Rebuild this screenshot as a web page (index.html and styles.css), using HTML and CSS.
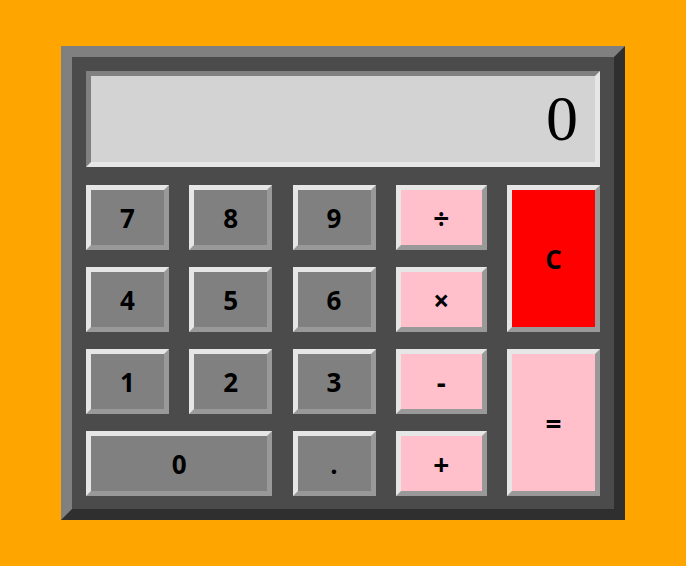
FILE: index.html
```html
<!DOCTYPE html>
<html>
<head>
<meta charset="utf-8">
<link rel="stylesheet" href="styles.css">
</head>
<body>
<div class="calc">
  <div class="display">0</div>
  <div class="keys">
    <button class="key num">7</button>
    <button class="key num">8</button>
    <button class="key num">9</button>
    <button class="key op">÷</button>
    <button class="key clear">C</button>
    <button class="key num">4</button>
    <button class="key num">5</button>
    <button class="key num">6</button>
    <button class="key op">×</button>
    <button class="key num">1</button>
    <button class="key num">2</button>
    <button class="key num">3</button>
    <button class="key op">-</button>
    <button class="key op equals">=</button>
    <button class="key num zero">0</button>
    <button class="key num">.</button>
    <button class="key op">+</button>
  </div>
</div>
</body>
</html>
```
FILE: styles.css
```css
html, body {
  margin: 0;
  padding: 0;
}
body {
  background: #ffa500;
  width: 686px;
  height: 566px;
  padding-top: 46px;
  padding-left: 61px;
  box-sizing: border-box;
  font-family: "Open Sans", "Noto Sans", sans-serif;
}
.calc {
  width: 564px;
  height: 474px;
  box-sizing: border-box;
  background: #4b4b4b;
  border-style: solid;
  border-width: 11px;
  border-color: #808080 #2f2f2f #2f2f2f #808080;
  padding: 14px 14px 13px 14px;
}
.display {
  height: 96px;
  box-sizing: border-box;
  background: #d3d3d3;
  border-style: solid;
  border-width: 5px;
  border-color: #808080 #e6e6e6 #e6e6e6 #808080;
  font-family: "Liberation Serif", serif;
  font-size: 64px;
  line-height: 86px;
  text-align: right;
  padding-right: 17px;
  color: #000;
}
.keys {
  margin-top: 18px;
  display: grid;
  grid-template-columns: 83px 83px 83px 91px 93px;
  grid-template-rows: 65px 65px 65px 65px;
  column-gap: 20.25px;
  row-gap: 17px;
}
.key {
  margin: 0;
  padding: 0;
  box-sizing: border-box;
  border-style: solid;
  border-width: 5px;
  border-color: #e6e6e6 #999999 #999999 #e6e6e6;
  font-family: "Open Sans", "Noto Sans", sans-serif;
  font-weight: 700;
  font-size: 26px;
  color: #000;
  display: flex;
  align-items: center;
  justify-content: center;
}
.num { background: #808080; }
.op { background: #ffc0cb; font-size: 28px; }
.clear {
  background: #ff0000;
  grid-column: 5;
  grid-row: 1 / span 2;
}
.equals {
  grid-column: 5;
  grid-row: 3 / span 2;
}
.zero {
  grid-column: 1 / span 2;
}
```
